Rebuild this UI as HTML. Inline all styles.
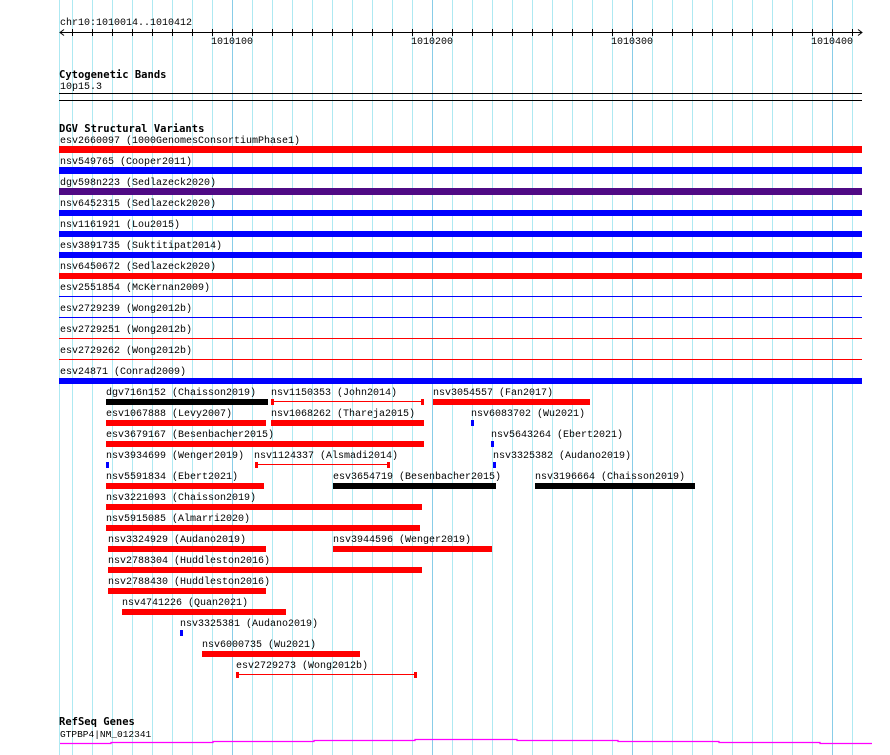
<!DOCTYPE html>
<html><head><meta charset="utf-8"><style>
html,body{margin:0;padding:0;background:#fff;width:890px;height:755px;overflow:hidden}
svg{display:block}
text{font-family:"Liberation Mono","DejaVu Sans Mono",monospace;font-size:10px;fill:#000}
.b{font-weight:bold;font-family:"DejaVu Sans Mono","Liberation Mono",monospace;font-size:10.5px}
</style></head><body>
<svg width="890" height="755" xmlns="http://www.w3.org/2000/svg">
<g stroke="#aee9f2" stroke-width="1">
<line x1="59.5" y1="0" x2="59.5" y2="755"/>
<line x1="72.5" y1="0" x2="72.5" y2="755"/><line x1="92.5" y1="0" x2="92.5" y2="755"/><line x1="112.5" y1="0" x2="112.5" y2="755"/><line x1="132.5" y1="0" x2="132.5" y2="755"/><line x1="152.5" y1="0" x2="152.5" y2="755"/><line x1="172.5" y1="0" x2="172.5" y2="755"/><line x1="192.5" y1="0" x2="192.5" y2="755"/><line x1="212.5" y1="0" x2="212.5" y2="755"/>
<line x1="252.5" y1="0" x2="252.5" y2="755"/><line x1="272.5" y1="0" x2="272.5" y2="755"/><line x1="292.5" y1="0" x2="292.5" y2="755"/><line x1="312.5" y1="0" x2="312.5" y2="755"/><line x1="332.5" y1="0" x2="332.5" y2="755"/><line x1="352.5" y1="0" x2="352.5" y2="755"/><line x1="372.5" y1="0" x2="372.5" y2="755"/><line x1="392.5" y1="0" x2="392.5" y2="755"/><line x1="412.5" y1="0" x2="412.5" y2="755"/>
<line x1="452.5" y1="0" x2="452.5" y2="755"/><line x1="472.5" y1="0" x2="472.5" y2="755"/><line x1="492.5" y1="0" x2="492.5" y2="755"/><line x1="512.5" y1="0" x2="512.5" y2="755"/><line x1="532.5" y1="0" x2="532.5" y2="755"/><line x1="552.5" y1="0" x2="552.5" y2="755"/><line x1="572.5" y1="0" x2="572.5" y2="755"/><line x1="592.5" y1="0" x2="592.5" y2="755"/><line x1="612.5" y1="0" x2="612.5" y2="755"/>
<line x1="652.5" y1="0" x2="652.5" y2="755"/><line x1="672.5" y1="0" x2="672.5" y2="755"/><line x1="692.5" y1="0" x2="692.5" y2="755"/><line x1="712.5" y1="0" x2="712.5" y2="755"/><line x1="732.5" y1="0" x2="732.5" y2="755"/><line x1="752.5" y1="0" x2="752.5" y2="755"/><line x1="772.5" y1="0" x2="772.5" y2="755"/><line x1="792.5" y1="0" x2="792.5" y2="755"/><line x1="812.5" y1="0" x2="812.5" y2="755"/>
<line x1="852.5" y1="0" x2="852.5" y2="755"/>
</g>
<g stroke="#88cde8" stroke-width="1">
<line x1="232.5" y1="0" x2="232.5" y2="755"/><line x1="432.5" y1="0" x2="432.5" y2="755"/><line x1="632.5" y1="0" x2="632.5" y2="755"/><line x1="832.5" y1="0" x2="832.5" y2="755"/>
</g>
<text x="60" y="25">chr10:1010014..1010412</text>
<g stroke="#000" stroke-width="1" fill="none">
<line x1="60" y1="32.5" x2="862" y2="32.5"/>
<polyline points="64,29.5 60,32.5 64,35.5"/>
<polyline points="858,29.5 862,32.5 858,35.5"/>
<path d="M72.5 29v7M92.5 29v7M112.5 29v7M132.5 29v7M152.5 29v7M172.5 29v7M192.5 29v7M212.5 29v7M232.5 29v7M252.5 29v7M272.5 29v7M292.5 29v7M312.5 29v7M332.5 29v7M352.5 29v7M372.5 29v7M392.5 29v7M412.5 29v7M432.5 29v7M452.5 29v7M472.5 29v7M492.5 29v7M512.5 29v7M532.5 29v7M552.5 29v7M572.5 29v7M592.5 29v7M612.5 29v7M632.5 29v7M652.5 29v7M672.5 29v7M692.5 29v7M712.5 29v7M732.5 29v7M752.5 29v7M772.5 29v7M792.5 29v7M812.5 29v7M832.5 29v7M852.5 29v7"/>
</g>
<text x="211" y="44">1010100</text><text x="411" y="44">1010200</text><text x="611" y="44">1010300</text><text x="811" y="44">1010400</text>
<text class="b" x="59" y="78">Cytogenetic Bands</text>
<text x="60" y="89">10p15.3</text>
<rect x="59" y="93" width="803" height="1" fill="#000"/>
<rect x="59" y="100" width="803" height="1" fill="#000"/>
<text class="b" x="59" y="132">DGV Structural Variants</text>
<g>
<g transform="translate(0,-1)">
<text x="60" y="144">esv2660097 (1000GenomesConsortiumPhase1)</text>
<text x="60" y="165">nsv549765 (Cooper2011)</text>
<text x="60" y="186">dgv598n223 (Sedlazeck2020)</text>
<text x="60" y="207">nsv6452315 (Sedlazeck2020)</text>
<text x="60" y="228">nsv1161921 (Lou2015)</text>
<text x="60" y="249">esv3891735 (Suktitipat2014)</text>
<text x="60" y="270">nsv6450672 (Sedlazeck2020)</text>
<text x="60" y="291">esv2551854 (McKernan2009)</text>
<text x="60" y="312">esv2729239 (Wong2012b)</text>
<text x="60" y="333">esv2729251 (Wong2012b)</text>
<text x="60" y="354">esv2729262 (Wong2012b)</text>
<text x="60" y="375">esv24871 (Conrad2009)</text>
</g>
<rect x="59" y="146" width="803" height="7" fill="#ff0000"/>
<rect x="59" y="167" width="803" height="7" fill="#0000ff"/>
<rect x="59" y="188" width="803" height="7" fill="#4f0a85"/>
<rect x="59" y="210" width="803" height="6" fill="#0000ff"/>
<rect x="59" y="231" width="803" height="6" fill="#0000ff"/>
<rect x="59" y="252" width="803" height="6" fill="#0000ff"/>
<rect x="59" y="273" width="803" height="6" fill="#ff0000"/>
<rect x="59" y="296" width="803" height="1" fill="#0000ff"/>
<rect x="59" y="317" width="803" height="1" fill="#0000ff"/>
<rect x="59" y="338" width="803" height="1" fill="#ff0000"/>
<rect x="59" y="359" width="803" height="1" fill="#ff0000"/>
<rect x="59" y="378" width="803" height="6" fill="#0000ff"/>
</g>
<g transform="translate(0,-1)">
<text x="106" y="396">dgv716n152 (Chaisson2019)</text>
<text x="271" y="396">nsv1150353 (John2014)</text>
<text x="433" y="396">nsv3054557 (Fan2017)</text>
<text x="106" y="417">esv1067888 (Levy2007)</text>
<text x="271" y="417">nsv1068262 (Thareja2015)</text>
<text x="471" y="417">nsv6083702 (Wu2021)</text>
<text x="106" y="438">esv3679167 (Besenbacher2015)</text>
<text x="491" y="438">nsv5643264 (Ebert2021)</text>
<text x="106" y="459">nsv3934699 (Wenger2019)</text>
<text x="254" y="459">nsv1124337 (Alsmadi2014)</text>
<text x="493" y="459">nsv3325382 (Audano2019)</text>
<text x="106" y="480">nsv5591834 (Ebert2021)</text>
<text x="333" y="480">esv3654719 (Besenbacher2015)</text>
<text x="535" y="480">nsv3196664 (Chaisson2019)</text>
<text x="106" y="501">nsv3221093 (Chaisson2019)</text>
<text x="106" y="522">nsv5915085 (Almarri2020)</text>
<text x="108" y="543">nsv3324929 (Audano2019)</text>
<text x="333" y="543">nsv3944596 (Wenger2019)</text>
<text x="108" y="564">nsv2788304 (Huddleston2016)</text>
<text x="108" y="585">nsv2788430 (Huddleston2016)</text>
<text x="122" y="606">nsv4741226 (Quan2021)</text>
<text x="180" y="627">nsv3325381 (Audano2019)</text>
<text x="202" y="648">nsv6000735 (Wu2021)</text>
<text x="236" y="669">esv2729273 (Wong2012b)</text>
</g>
<g>
<rect x="106" y="399" width="162" height="6" fill="#000"/>
<rect x="271" y="399" width="3" height="6" fill="#f00"/><rect x="271" y="401" width="153" height="1" fill="#f00"/><rect x="421" y="399" width="3" height="6" fill="#f00"/>
<rect x="433" y="399" width="157" height="6" fill="#f00"/>
<rect x="106" y="420" width="160" height="6" fill="#f00"/>
<rect x="271" y="420" width="153" height="6" fill="#f00"/>
<rect x="471" y="420" width="3" height="6" fill="#00f"/>
<rect x="106" y="441" width="318" height="6" fill="#f00"/>
<rect x="491" y="441" width="3" height="6" fill="#00f"/>
<rect x="106" y="462" width="3" height="6" fill="#00f"/>
<rect x="255" y="462" width="3" height="6" fill="#f00"/><rect x="255" y="464" width="135" height="1" fill="#f00"/><rect x="387" y="462" width="3" height="6" fill="#f00"/>
<rect x="493" y="462" width="3" height="6" fill="#00f"/>
<rect x="106" y="483" width="158" height="6" fill="#f00"/>
<rect x="333" y="483" width="163" height="6" fill="#000"/>
<rect x="535" y="483" width="160" height="6" fill="#000"/>
<rect x="106" y="504" width="316" height="6" fill="#f00"/>
<rect x="106" y="525" width="314" height="6" fill="#f00"/>
<rect x="108" y="546" width="158" height="6" fill="#f00"/>
<rect x="333" y="546" width="159" height="6" fill="#f00"/>
<rect x="108" y="567" width="314" height="6" fill="#f00"/>
<rect x="108" y="588" width="158" height="6" fill="#f00"/>
<rect x="122" y="609" width="164" height="6" fill="#f00"/>
<rect x="180" y="630" width="3" height="6" fill="#00f"/>
<rect x="202" y="651" width="158" height="6" fill="#f00"/>
<rect x="236" y="672" width="3" height="6" fill="#f00"/><rect x="236" y="674" width="181" height="1" fill="#f00"/><rect x="414" y="672" width="3" height="6" fill="#f00"/>
</g>
<text class="b" x="59" y="725">RefSeq Genes</text>
<text x="60" y="737" style="font-size:9.5px">GTPBP4|NM_012341</text>
<polyline fill="none" stroke="#ff00ff" stroke-width="1.3" points="60,743.5 111,743.5 111,742.5 213,742.5 213,741.5 314,741.5 314,740.5 415,740.5 415,739.5 517,739.5 517,740.5 618,740.5 618,741.5 719,741.5 719,742.5 820,742.5 820,743.5 872,743.5"/>
</svg>
</body></html>
